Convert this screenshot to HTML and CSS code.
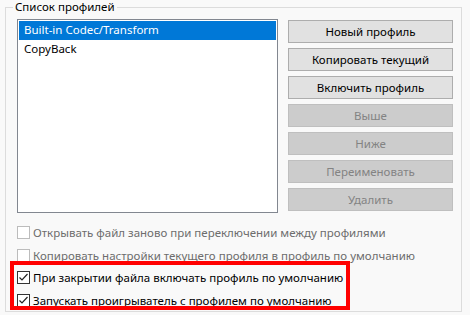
FILE: index.html
```html
<!DOCTYPE html>
<html lang="ru">
<head>
    <meta charset="UTF-8">
    <title>Профили</title>
    <link rel="stylesheet" href="styles.css">
</head>
<body>

    <!-- Profiles group -->
    <div class="group">
        <span class="group-title">Список профилей</span>

        <div class="top-row">
            <div class="listbox">
                <div class="list-item selected">Built-in Codec/Transform</div>
                <div class="list-item">CopyBack</div>
            </div>

            <div class="buttons">
                <button class="btn">Новый профиль</button>
                <button class="btn">Копировать текущий</button>
                <button class="btn">Включить профиль</button>
                <button class="btn" disabled>Выше</button>
                <button class="btn" disabled>Ниже</button>
                <button class="btn" disabled>Переименовать</button>
                <button class="btn" disabled>Удалить</button>
            </div>
        </div>

        <div class="options">
            <label class="option disabled">
                <span class="checkbox"></span>
                Открывать файл заново при переключении между профилями
            </label>
            <label class="option disabled">
                <span class="checkbox"></span>
                Копировать настройки текущего профиля в профиль по умолчанию
            </label>
            <label class="option">
                <span class="checkbox checked">
                    <svg width="11" height="11" viewBox="0 0 11 11"><polyline points="1.5,5.5 4,8 9.5,2" fill="none" stroke="#222" stroke-width="1.2"/></svg>
                </span>
                При закрытии файла включать профиль по умолчанию
            </label>
            <label class="option">
                <span class="checkbox checked">
                    <svg width="11" height="11" viewBox="0 0 11 11"><polyline points="1.5,5.5 4,8 9.5,2" fill="none" stroke="#222" stroke-width="1.2"/></svg>
                </span>
                Запускать проигрыватель с профилем по умолчанию
            </label>
        </div>

        <!-- Highlight annotation -->
        <div class="highlight"></div>
    </div>

</body>
</html>
```

FILE: styles.css
```css
/* Basic Reset */
* {
    margin: 0;
    padding: 0;
    box-sizing: border-box;
    font-family: "Noto Sans", "Open Sans", sans-serif;
}

body {
    background-color: #f9f9f9;
    color: #000;
    font-size: 11.5px;
}

/* Group box */
.group {
    position: relative;
    margin: 7px 0 0 5px;
    width: 457px;
    height: 305px;
    border: 1px solid #dcdcdc;
    padding: 11px 0 0 11px;
}

.group-title {
    position: absolute;
    top: -8px;
    left: 7px;
    padding: 0 2px;
    background-color: #f9f9f9;
    line-height: 14px;
}

.top-row {
    display: flex;
    align-items: flex-start;
}

/* List */
.listbox {
    width: 261px;
    height: 194px;
    border: 1px solid #828790;
    background-color: #fff;
    padding: 1px;
}

.list-item {
    height: 19px;
    line-height: 18px;
    padding-left: 5px;
}

.list-item + .list-item {
    height: 18px;
}

.list-item.selected {
    background-color: #0078d7;
    color: #fff;
}

/* Buttons */
.buttons {
    display: flex;
    flex-direction: column;
    gap: 5px;
    margin: 1px 0 0 10px;
}

.btn {
    width: 165px;
    height: 23px;
    background-color: #e1e1e1;
    border: 1px solid #adadad;
    font-size: 11.5px;
    color: #000;
}

.btn:disabled {
    background-color: #cccccc;
    border-color: #bfbfbf;
    color: #838383;
}

/* Options */
.options {
    display: flex;
    flex-direction: column;
    margin-top: 8px;
}

.option {
    display: flex;
    align-items: center;
    gap: 3px;
    height: 22.7px;
}

.option.disabled {
    color: #6d6d6d;
}

.checkbox {
    width: 13px;
    height: 13px;
    border: 1px solid #333;
    background-color: #fff;
    display: flex;
    align-items: center;
    justify-content: center;
    flex-shrink: 0;
}

.option.disabled .checkbox {
    border-color: #bcbcbc;
}

.highlight {
    position: absolute;
    left: 4px;
    top: 253px;
    width: 340px;
    height: 49px;
    border: 4px solid #ff0000;
}
```
